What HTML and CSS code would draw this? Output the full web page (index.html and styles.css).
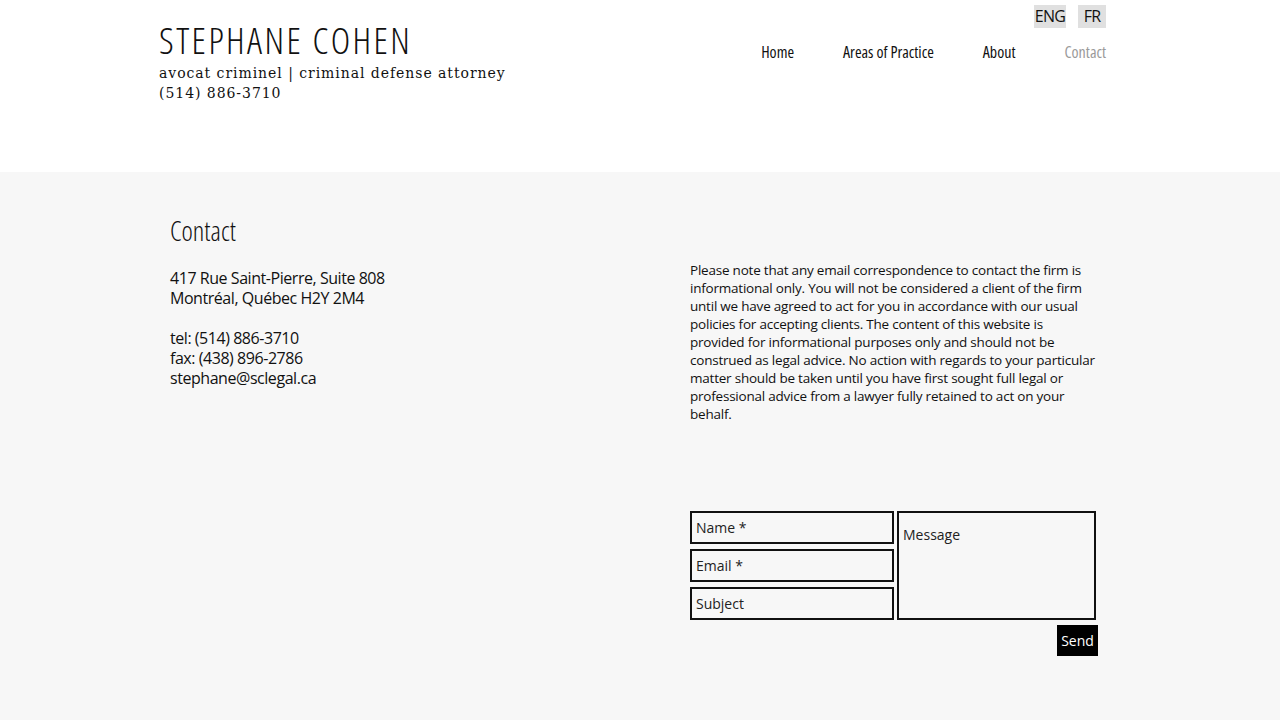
FILE: index.html
```html
<!DOCTYPE html>
<html lang="en">
<head>
<meta charset="utf-8">
<title>Stephane Cohen - Contact</title>
<link rel="stylesheet" href="styles.css">
</head>
<body>
<header class="site-header">
  <div class="header-inner">
    <div class="brand">
      <h1 class="brand-name">STEPHANE COHEN</h1>
      <p class="brand-tag">avocat criminel | criminal defense attorney</p>
      <p class="brand-tag">(514) 886-3710</p>
    </div>
    <div class="header-right">
      <div class="lang">
        <span class="lang-btn">ENG</span>
        <span class="lang-btn">FR</span>
      </div>
      <nav class="nav">
        <a class="nav-link">Home</a>
        <a class="nav-link">Areas of Practice</a>
        <a class="nav-link">About</a>
        <a class="nav-link current">Contact</a>
      </nav>
    </div>
  </div>
</header>
<main class="main">
  <div class="main-inner">
    <section class="info">
      <h2 class="info-title">Contact</h2>
      <p class="info-text">417 Rue Saint-Pierre, Suite 808<br>Montréal, Québec H2Y 2M4</p>
      <p class="info-text">tel: (514) 886-3710<br>fax: (438) 896-2786<br>stephane@sclegal.ca</p>
    </section>
    <section class="side">
      <p class="notice">Please note that any email correspondence to contact the firm is informational only. You will not be considered a client of the firm until we have agreed to act for you in accordance with our usual policies for accepting clients. The content of this website is provided for informational purposes only and should not be construed as legal advice. No action with regards to your particular matter should be taken until you have first sought full legal or professional advice from a lawyer fully retained to act on your behalf.</p>
      <form class="form">
        <div class="fields">
          <div class="col">
            <input class="field" placeholder="Name *">
            <input class="field" placeholder="Email *">
            <input class="field" placeholder="Subject">
          </div>
          <textarea class="field message" placeholder="Message"></textarea>
        </div>
        <div class="actions"><button type="button" class="send">Send</button></div>
      </form>
    </section>
  </div>
</main>
</body>
</html>
```
FILE: styles.css
```css
* { box-sizing: border-box; }
html, body { margin: 0; padding: 0; }
body {
  background: #f7f7f7;
  color: #111;
  font-family: "Open Sans", "Noto Sans", sans-serif;
}
.site-header { background: #fff; height: 172px; }
.header-inner {
  width: 947px;
  margin: 0 0 0 159px;
  display: flex;
  justify-content: space-between;
}
.brand { padding-top: 19px; }
.brand-name {
  margin: 0 0 2px;
  font-family: "Open Sans", sans-serif;
  font-stretch: 75%;
  font-weight: 300;
  font-size: 37px;
  line-height: 42px;
  letter-spacing: 2.4px;
  color: #111;
}
.brand-tag {
  margin: 0;
  font-family: "DejaVu Serif", "Liberation Serif", serif;
  font-size: 14px;
  line-height: 20px;
  letter-spacing: 0.95px;
  color: #111;
}
.header-right {
  display: flex;
  flex-direction: column;
  align-items: flex-end;
  padding-top: 5px;
}
.lang { display: flex; gap: 12px; }
.lang-btn {
  background: #e0e0e0;
  font-family: "Open Sans", sans-serif;
  font-size: 16px;
  line-height: 23px;
  padding: 0 1px;
  min-width: 28px;
  text-align: center;
  letter-spacing: -0.8px;
}
.nav { display: flex; gap: 49px; margin-top: 12px; }
.nav-link {
  font-family: "Open Sans", sans-serif;
  font-stretch: 75%;
  font-size: 16px;
  line-height: 24px;
  color: #111;
}
.nav-link.current { color: #9a9a9a; }
.main-inner {
  margin-left: 170px;
  width: 928px;
  display: flex;
  justify-content: space-between;
}
.info { padding-top: 41px; }
.info-title {
  margin: 0 0 19px;
  font-family: "Open Sans", sans-serif;
  font-stretch: 75%;
  font-weight: 300;
  font-size: 27px;
  line-height: 36px;
}
.info-text {
  margin: 0 0 20px;
  font-size: 16px;
  line-height: 20px;
  letter-spacing: -0.45px;
}
.side { width: 408px; padding-top: 89px; }
.notice {
  margin: 0;
  font-size: 13.5px;
  line-height: 18px;
  letter-spacing: -0.22px;
  width: 405px;
}
.form { margin-top: 88px; }
.fields { display: flex; gap: 3px; }
.col { display: flex; flex-direction: column; gap: 5px; }
.field {
  width: 204px;
  height: 33px;
  border: 2px solid #111;
  background: #f7f7f7;
  font-family: "Open Sans", sans-serif;
  font-size: 14px;
  padding: 0 4px;
  color: #111;
}
.field::placeholder { color: #222; }
.message {
  width: 199px;
  height: 109px;
  padding: 12px 4px;
  resize: none;
}
.actions { display: flex; justify-content: flex-end; margin-top: 5px; }
.send {
  background: #000;
  color: #fff;
  border: 0;
  height: 31px;
  width: 41px;
  padding: 0;
  font-family: "Open Sans", sans-serif;
  font-size: 14px;
}
```
